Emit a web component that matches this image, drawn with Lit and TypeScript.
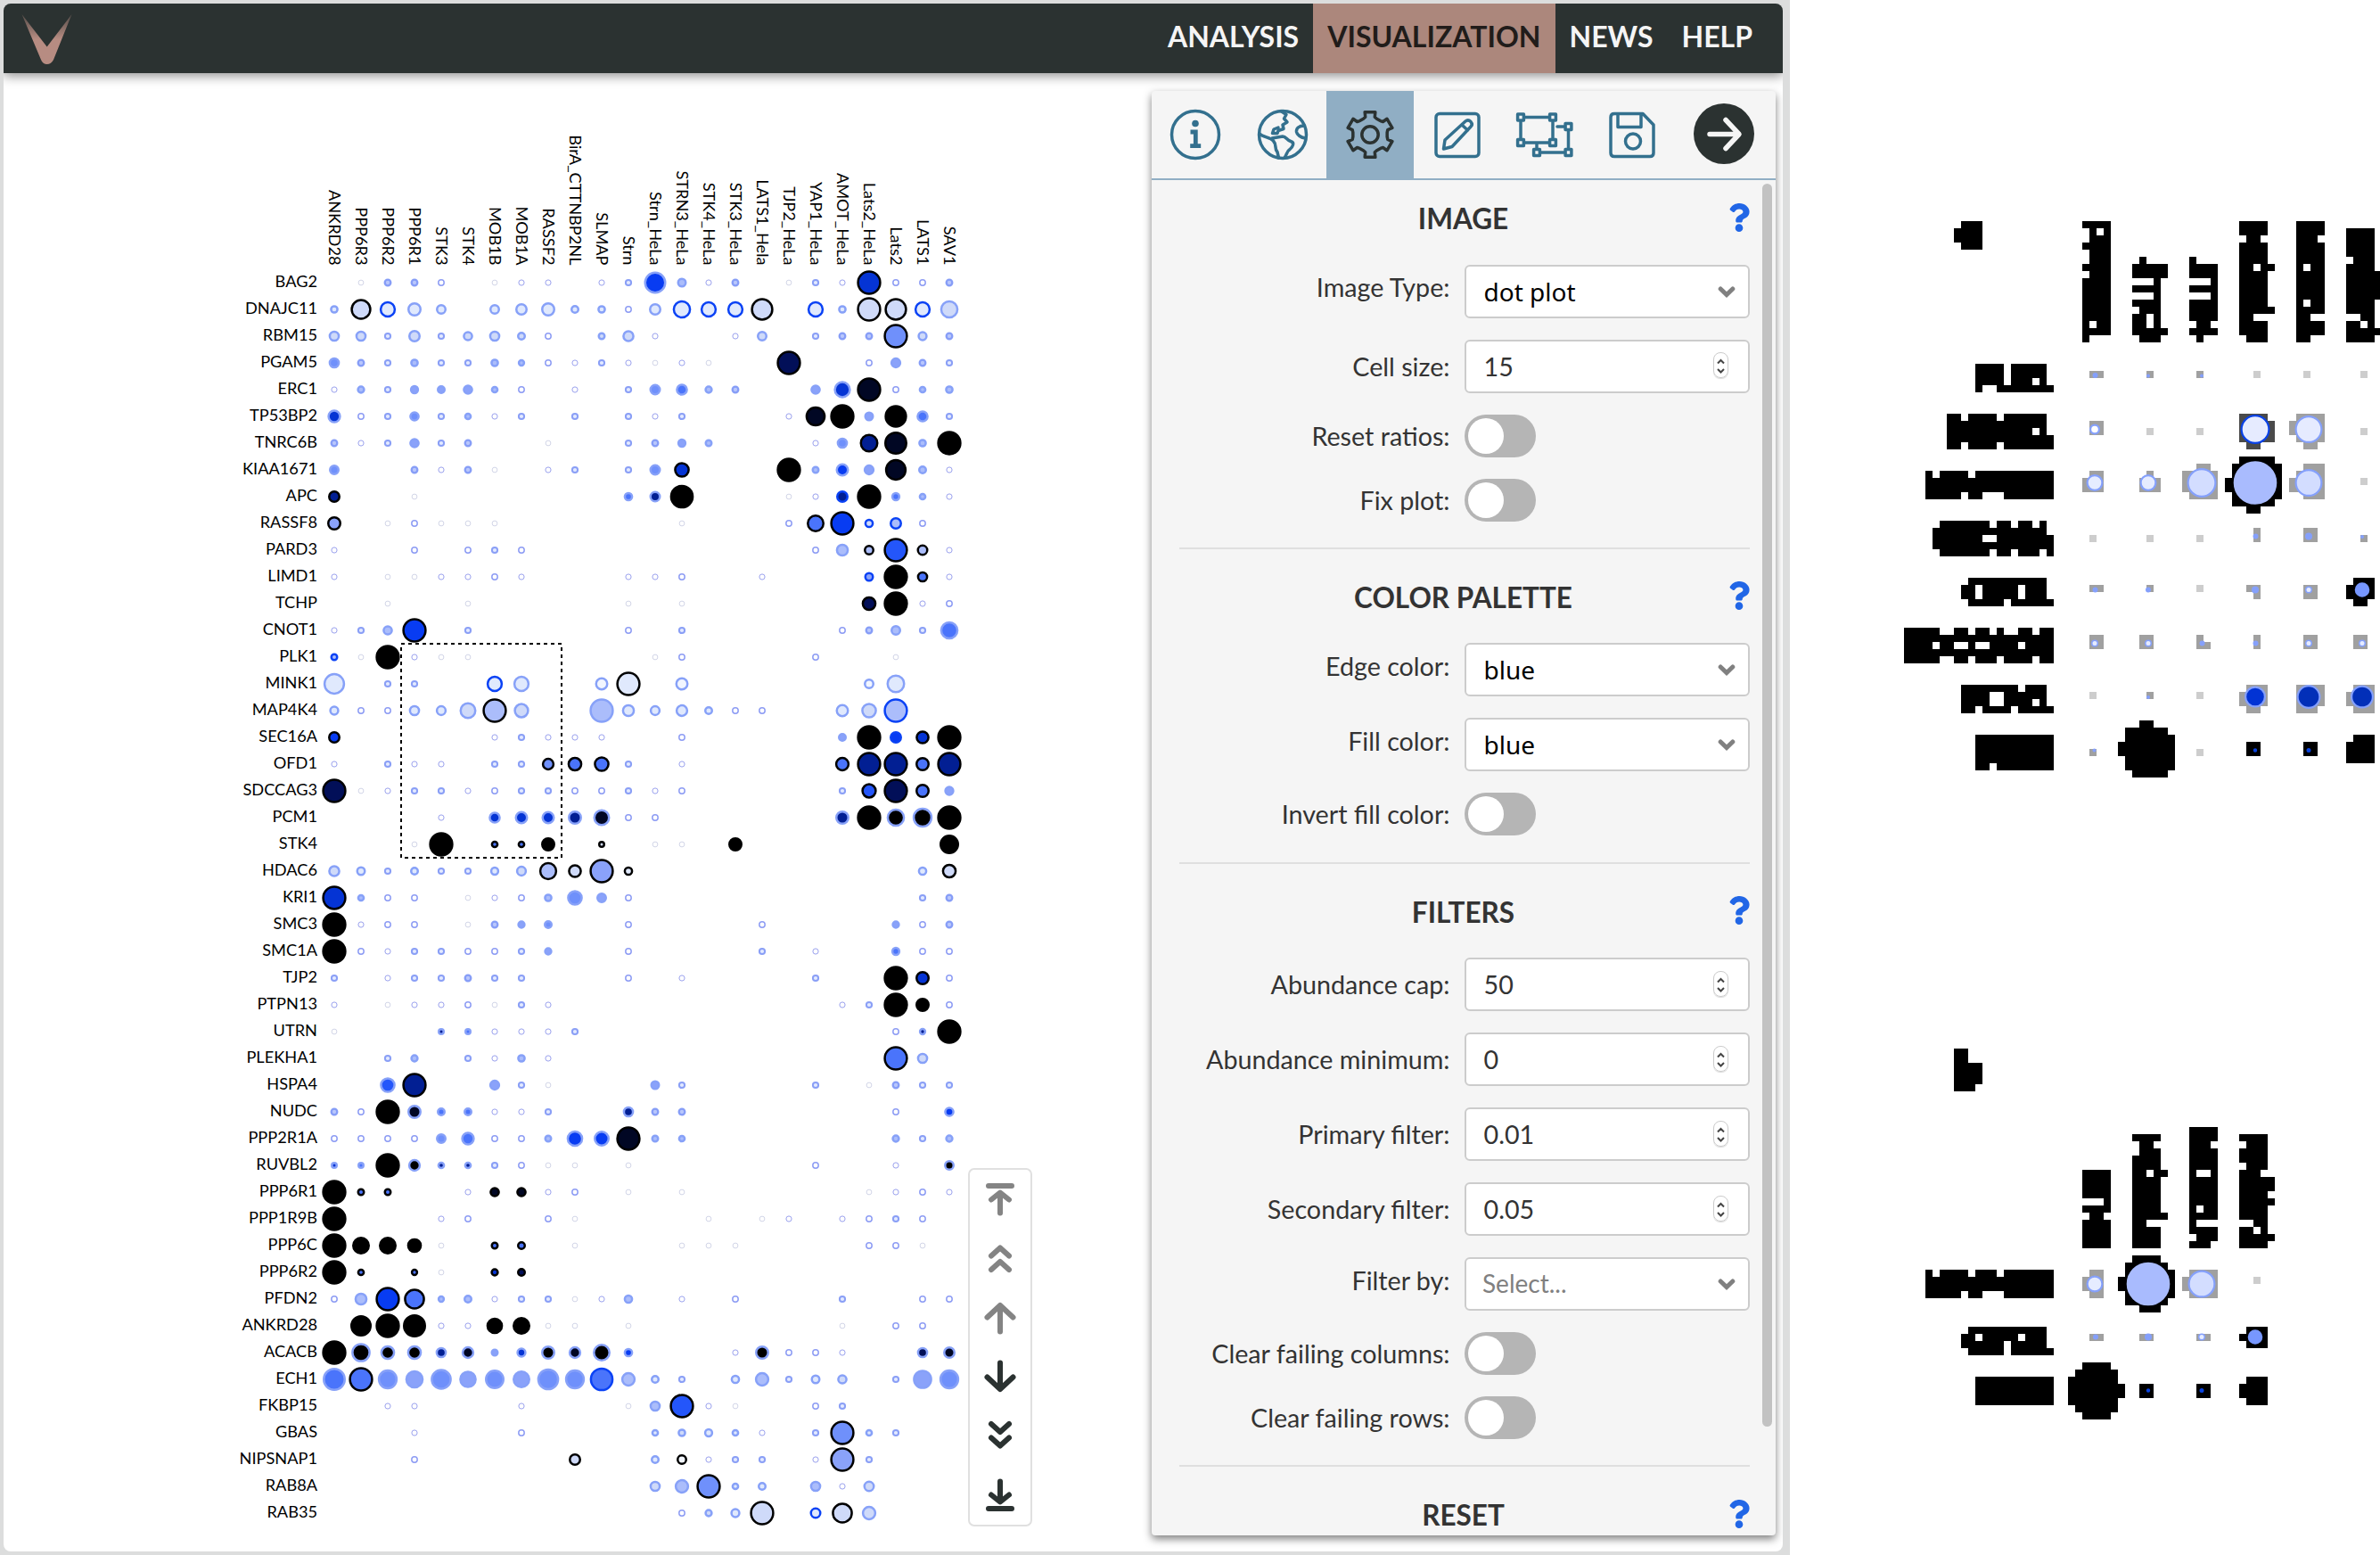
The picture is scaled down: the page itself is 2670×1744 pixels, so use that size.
import { LitElement, html, svg, css } from "lit";
import { customElement, property } from "lit/decorators.js";

const COLUMNS = [
  "ANKRD28", "PPP6R3", "PPP6R2", "PPP6R1", "STK3", "STK4", "MOB1B", "MOB1A", "RASSF2", "BirA_CTTNBP2NL",
  "SLMAP", "Strn", "Strn_HeLa", "STRN3_HeLa", "STK4_HeLa", "STK3_HeLa", "LATS1_Hela", "TJP2_HeLa",
  "YAP1_HeLa", "AMOT_HeLa", "Lats2_HeLa", "Lats2", "LATS1", "SAV1",
];

/* One token per column: "." is an empty cell, a letter is a preset small ring,
   otherwise <size><edge><fill>, where size is six times the outer radius. */
const ROWS: [string, string][] = [
  ["BAG2", ". a e e c . a b b . b d 75l7 33l3 b e . a d b 82k8 c c e"],
  ["DNAJC11", "29l1 70k2 55b1 48l1 36l1 . 36l1 42l1 48l1 30l1 29l1 c 42l1 62b1 55b1 55b1 76k2 . 55b1 29l1 82k2 76k2 55b1 62l2"],
  ["RBM15", "38l2 38l2 d 42l2 d 35l2 38l2 30l2 c . 27l2 41l2 b . . b 36l2 . d e e 82k5 34l2 e"],
  ["PGAM5", "38l5 e d 29l3 d d 29l3 25l3 c b d b a b a . . 82kA . . c 37l4 e d"],
  ["ERC1", "b 28l3 d 31l4 30l4 35l4 26l3 c . b . d 39l5 41l6 28l3 e . . 35l4 58l8 82kB c 26l3 29l3"],
  ["TP53BP2", "46l8 c d 35l5 d 26l3 b d . d . d b d . . . b 68kB 82kC 33l4 76kC 41l6 d"],
  ["TNRC6B", "e b d 35l4 d e . . a . . d e 31l4 27l3 . . . b 38l5 63k9 78kB 29l3 82kC"],
  ["KIAA1671", "36l5 . . e b e a . b d . d 39l5 53k8 . . . 82kC 27l3 45l7 37l4 73kB 30l3 b"],
  ["APC", "42k9 . . a . . . . . . . 32l6 39l9 80kC . . . a b 42b9 82kC 31l6 26l3 b"],
  ["RASSF8", "48k4 . a c a a a . . . . . . a . . . c 60k6 82k7 32b2 42b3 c ."],
  ["PARD3", "b . . c . c d c . . . . . . . . . . c 44l3 36k3 82km 39k3 b"],
  ["LIMD1", "b . a a b b c b . . . b b c . . b . . . 33b4 82kC 38k6 b"],
  ["TCHP", ". . a . . a . . . . . a . a . . . . . . 50kA 82kC b c"],
  ["CNOT1", "b d 35l3 82k7 . d . . . . . c . d . . . . . c e 36l3 d 62l6"],
  ["PLK1", "27b3 a 82kC b a a . . . . . . a c . . . . c . . a . ."],
  ["MINK1", "73l1 . d d . . 55b1 55l1 . . 45l0 82k1 . 45l0 . . . . . . 36l0 63l1 . ."],
  ["MAP4K4", "34l1 c c 38l1 37l1 57l2 82k3 52l2 . . 82l3 44l1 37l1 43l1 30l1 c c . . 45l1 53l2 82b3 . ."],
  ["SEC16A", "42k7 . . . . . b d b b b . . c . . . . . 30l4 82kC 42b7 47k8 82kC"],
  ["OFD1", "b . d b b . d d 43k5 50k6 53k6 d . b . . . . . 49k6 82k9 82k9 48k6 82k9"],
  ["SDCCAG3", "82kA a b d d b c d d c c d b c . . . . . d 52km 82kA 48k6 34l4"],
  ["PCM1", ". . . . b . 41l8 45l8 45l8 48l9 57lB c c . . . . . . 48l9 82kC 62lC 67lC 82kC"],
  ["STK4", ". . . a 82kC . 26k6 26k6 48kC . 24k2 . a a . 48kC . . . . . . . 66kC"],
  ["HDAC6", "41l2 33l1 d 30l1 d d 31l1 37l2 61k3 47k2 82k4 32k1 . . . . . . . . . . 32l1 50k2"],
  ["KRI1", "82k8 26l3 c c . a b c 29l3 53l5 36l4 c . . . . . . . . . . d e"],
  ["SMC3", "82kC b c c . a e 28l4 30l5 . . c . . . . c . . . . 28l4 c e"],
  ["SMC1A", "82kC c b d d c c d 28l4 . . c . . . . d . b . . 31l6 c c"],
  ["TJP2", "d . b d d e d d . . . c . b . . . . d . . 82kC 48k8 c"],
  ["PTPN13", "b . a b b c a d b . . . . . . . . . . b d 82kC 48kC c"],
  ["UTRN", "a . . . 24l9 24l6 b b b d . . . . . . . . . . . c 25l9 82kC"],
  ["PLEKHA1", ". . d 28l3 . d b 29l3 b . . . . . . . . . . . . 82k6 38l2 ."],
  ["HSPA4", ". . 53lm 82k9 . . 37l4 d a . . . 33l4 d . . . . d . a e d d"],
  ["NUDC", "e c 82kC 48lB 30l6 30l6 b b d . . 38l9 e e . . . . . . . c . 35l7"],
  ["PPP2R1A", "c c c c 36l5 46l6 c c 27l3 56l7 54l7 82kB 27l3 26l3 . . . . . . . 28l3 d 28l3"],
  ["RUVBL2", "24l8 24l6 82kC 43lC 26l9 26l9 d c a a . a . . . . . . c . . b . 36lC"],
  ["PPP6R1", "82kC 27k6 27k6 . . b 35kB 35kB b c . a . a . . . . . . a b c b"],
  ["PPP1R9B", "82kC . . . b c . . c a . . . . a . a b . b c d c ."],
  ["PPP6C", "82kC 60kC 60kC 50kC a . 27k6 30k6 . a . . . a a a . . . . c c a ."],
  ["PPP6R2", "82kC 26k6 . 25k6 a . 28k8 30kA . . ."],
  ["PFDN2", "c 44l3 82k7 71k6 25l3 30l3 b d d a b 32l3 . b . c . . . d . . c c"],
  ["ANKRD28", ". 72kC 82kC 78kC b b 56kC 60kC a a . a . . . . . . . a . c c ."],
  ["ACACB", "82kC 65lC 50lC 50lC 38l9 43lB 27l4 34l8 48lC 43lB 60lC 32l7 . . . b 48lC c c b . . 38lA 42lB"],
  ["ECH1", "78l6 82k6 67l5 62l4 71l5 59l4 66l5 60l4 74l5 67l5 80b6 49l3 30l1 d . 32l1 49l3 d 33l1 35l2 . d 65l4 67l5"],
  ["FKBP15", ". . b b . . . b . . . a 38l3 82km b a . . c d . . . ."],
  ["GBAS", ". . . b . . . c . . . . 26l1 29l2 31l1 26l1 b . d 82k5 26l1 d . ."],
  ["NIPSNAP1", ". . . c . . . . . 42k2 . . 30l1 36k0 b d d . b 82k4 d . . ."],
  ["RAB8A", ". . . . . . . . . . . . 38l2 49l3 82k5 26l1 30l1 . 38l3 b 39l2 . . ."],
  ["RAB35", ". . . . . . . . . . . . . c 28l2 34l1 82k2 . 39b1 71k2 49l2 . . ."],
];

const EDGE: Record<string, string> = { k: "#000", b: "#0a42f5", l: "#87a1f8" };
const FILL: Record<string, string> = {
  "0": "#f2f6ff", "1": "#e0e9fd", "2": "#cfdaf9", "3": "#abbdfb", "4": "#8aa2fa", "5": "#6f90fb", "6": "#4a74fb",
  m: "#2456fa", "7": "#083cf2", "8": "#0534d4", "9": "#021f93", A: "#020f58", B: "#010724", C: "#000",
};
const PRESET: Record<string, [number, number, string, string]> = {
  a: [2.9, 0.6, "#b4b8d6", "none"],
  b: [3.1, 1, "#9ba2ee", "#fff"],
  c: [3.2, 1.5, "#8e9df4", "#fff"],
  d: [3.1, 2, "#8a9ff6", "#e3eaff"],
  e: [3.3, 2.3, "#869df7", "#b9c7fc"],
};

const dot = (token: string, x: number, y: number) => {
  if (token === ".") return null;
  const p = PRESET[token];
  if (p) return svg`<circle cx=${x} cy=${y} r=${p[0]} stroke-width=${p[1]} stroke=${p[2]} fill=${p[3]} />`;
  const n = token.length;
  const size = Number(token.slice(0, n - 2));
  return svg`<circle cx=${x} cy=${y} r=${size / 6 - 1.25} stroke-width="2.5" stroke=${EDGE[token[n - 2]]} fill=${FILL[token[n - 1]]} />`;
};

@customElement("dot-plot")
class DotPlot extends LitElement {
  static styles = css`
    :host { display: block; }
    svg { display: block; }
    text { font: 400 18.2px Lato, sans-serif; fill: #000; text-anchor: end; }
    .region { fill: none; stroke: #000; stroke-width: 2; stroke-dasharray: 4 4; }
  `;
  render() {
    return html`<svg width="1288" height="1658" viewBox="4 82 1288 1658">
      ${COLUMNS.map((c, i) => svg`<text transform=${`translate(${369.2 + i * 30} 297.5) rotate(90)`}>${c}</text>`)}
      ${ROWS.map(([name, cells], r) => svg`
        <text x="356" y=${321.6 + r * 30}>${name}</text>
        ${cells.split(" ").map((t, c) => dot(t, 375 + c * 30, 317 + r * 30))}`)}
      <rect class="region" x="450" y="722" width="180" height="240" />
    </svg>`;
  }
}

const NAV_ICONS: { d: string; muted: boolean }[] = [
  { d: "M-13 -15H13M0 15.5V-7M-10 0.5L0 -7.5L10 0.5", muted: true },
  { d: "M-10 -2.5L0 -11.5L10 -2.5M-10 13L0 4L10 13", muted: true },
  { d: "M0 15.5V-13M-14.5 -0.5L0 -14L14.5 -0.5", muted: true },
  { d: "M0 -15.5V13M-14.5 0.5L0 14L14.5 0.5", muted: false },
  { d: "M-10 -13L0 -4L10 -13M-10 2.5L0 11.5L10 2.5", muted: false },
  { d: "M-13 15H13M0 -15.5V7M-10 -0.5L0 7.5L10 -0.5", muted: false },
];

@customElement("scroll-nav")
class ScrollNav extends LitElement {
  static styles = css`
    :host {
      display: flex; flex-direction: column; box-sizing: border-box; width: 72px; height: 402px;
      border: 2px solid #e0e0e0; border-radius: 7px; background: #fff;
    }
    .item { flex: 1; display: flex; align-items: center; justify-content: center; color: #2b3231; }
    .muted { color: #848484; }
    path { fill: none; stroke: currentColor; stroke-width: 6; stroke-linecap: round; stroke-linejoin: round; }
  `;
  render() {
    return NAV_ICONS.map((i) => html`<div class="item ${i.muted ? "muted" : ""}">
      <svg width="44" height="44" viewBox="-22 -22 44 44"><path d=${i.d} /></svg>
    </div>`);
  }
}

const gearPath = () => {
  const pts: string[] = [];
  for (let i = 0; i < 6; i++) {
    const base = -90 + i * 60;
    for (const [a, r] of [[-23, 19.3], [-15, 20.5], [-13, 26], [13, 26], [15, 20.5], [23, 19.3]]) {
      const t = ((base + a) * Math.PI) / 180;
      pts.push(`${(r * Math.cos(t)).toFixed(2)} ${(r * Math.sin(t)).toFixed(2)}`);
    }
  }
  return `M${pts.join("L")}Z`;
};

const NODES = [[-27, -19.5], [9, -19.5], [-27, 9], [9, 9], [26.5, -9], [-9, 20], [26.5, 20]];
const TAB_ICONS = [
  svg`<circle r="26.5" /><circle class="solid" cy="-12.5" r="3.8" /><path stroke-width="4.8" stroke-linejoin="miter" stroke-linecap="butt" d="M-5.5 -3H0.3V12.6M-5.8 12.6H6.2" />`,
  svg`<circle r="26.5" /><path d="M-2 -26.5L4 -22.500L1.500 -18L5 -14L0 -11L1 -6.500L-5 -4.500L-6 -1.500H-11.500L-10 -6L-5 -8M-26 -1C-22 3-14 3-10.500 7C-6 12-10 15-6 19.500L-4.500 26M-12 4L0 2C4 2 4 6 9 7.500C14 9 11 14 8 16.500C4 19 5 22 2 26M24 -10C18 -10 15 -7 15.500 -3C16 0 20 3 25 4" />`,
  svg`<path d=${gearPath()} /><circle r="9.2" />`,
  svg`<rect x="-24" y="-23.5" width="48" height="48" rx="4" /><path d="M-15.5 16L-14 6L9 -15Q12 -17.500 15 -14.500Q17.500 -11.500 15 -9L-6 13.500ZM5 -11L11.500 -5" />`,
  svg`<path d="M-22 -19.500H4M-27 -14.500V4M9 -14.500V4M-22 9H4M14 -9H21.500M26.500 -4V15M-9 9V15M-4 20H21.500" />
    ${NODES.map(([x, y]) => svg`<rect x=${x - 3.4} y=${y - 3.4} width="6.800" height="6.800" />`)}`,
  svg`<path d="M-20 -23.500H12L24 -11V20.500Q24 24.500 20 24.500H-20Q-24 24.500 -24 20.500V-19.500Q-24 -23.500 -20 -23.500ZM-16 -23.500V-8.500H10V-23.500" /><circle cx="1" cy="7.500" r="8.500" />`,
];

const QUESTION = "M202.021 0C122.202 0 70.503 32.703 29.914 91.026c-7.363 10.58-5.093 25.086 5.178 32.874l43.138 32.709c10.373 7.865 25.132 6.026 33.253-4.148 25.049-31.381 43.63-49.449 82.757-49.449 30.764 0 68.816 19.799 68.816 49.631 0 22.552-18.617 34.134-48.993 51.164-35.423 19.86-82.299 44.576-82.299 106.405V320c0 13.255 10.745 24 24 24h72.471c13.255 0 24-10.745 24-24v-5.773c0-42.86 125.268-44.645 125.268-160.627C377.504 66.256 286.902 0 202.021 0zM192 373.459c-38.196 0-69.271 31.075-69.271 69.271 0 38.195 31.075 69.27 69.271 69.27s69.271-31.075 69.271-69.271-31.075-69.27-69.271-69.27z";

type Field = { kind: "select" | "number" | "toggle"; label: string; value?: string; placeholder?: boolean };
const SECTIONS: { title: string; fields: Field[] }[] = [
  { title: "IMAGE", fields: [
    { kind: "select", label: "Image Type:", value: "dot plot" },
    { kind: "number", label: "Cell size:", value: "15" },
    { kind: "toggle", label: "Reset ratios:" },
    { kind: "toggle", label: "Fix plot:" },
  ] },
  { title: "COLOR PALETTE", fields: [
    { kind: "select", label: "Edge color:", value: "blue" },
    { kind: "select", label: "Fill color:", value: "blue" },
    { kind: "toggle", label: "Invert fill color:" },
  ] },
  { title: "FILTERS", fields: [
    { kind: "number", label: "Abundance cap:", value: "50" },
    { kind: "number", label: "Abundance minimum:", value: "0" },
    { kind: "number", label: "Primary filter:", value: "0.01" },
    { kind: "number", label: "Secondary filter:", value: "0.05" },
    { kind: "select", label: "Filter by:", value: "Select...", placeholder: true },
    { kind: "toggle", label: "Clear failing columns:" },
    { kind: "toggle", label: "Clear failing rows:" },
  ] },
  { title: "RESET", fields: [] },
];

@customElement("settings-panel")
class SettingsPanel extends LitElement {
  static styles = css`
    :host {
      display: flex; flex-direction: column; width: 700px; height: 1620px; background: #f5f5f5; color: #333;
      border-radius: 4px; overflow: hidden; box-shadow: 0 4px 10px rgba(0, 0, 0, 0.5); font-family: Lato, sans-serif;
    }
    .tabs { display: flex; height: 98px; flex: none; border-bottom: 2px solid #90aec4; }
    .tab { width: 98px; display: flex; align-items: center; justify-content: center; color: #33708e; }
    .tab svg { fill: none; stroke: currentColor; stroke-width: 3.500; stroke-linejoin: round; stroke-linecap: round; margin-top: -1px; }
    .tab .solid { fill: currentColor; stroke: none; }
    .active { background: #90aec4; color: #2b3231; }
    .next { flex: 1; display: flex; align-items: center; padding-left: 18.500px; padding-bottom: 2px; }
    .body { flex: 1; display: flex; min-height: 0; overflow: hidden; }
    .content { width: 640px; padding-left: 30.500px; flex: none; }
    .bar { width: 11.500px; height: 1394px; margin: 4px 0 0 14px; border-radius: 6px; background: #c2c2c2; }
    .section { padding: 34px 0 29.250px; border-top: 2px solid #dfdfdf; }
    .section:first-child { border-top: none; padding-top: 23px; }
    .head { display: grid; grid-template-columns: 22px 1fr 24px; align-items: center; height: 40px; margin-bottom: 31.500px; }
    h2 { grid-column: 2; margin: 0; text-align: center; font-size: 31.500px; line-height: 40px; font-weight: 700; }
    .help { fill: #2166e6; display: block; margin-top: -3px; }
    .fields { display: flex; flex-direction: column; gap: 24px; }
    .field { display: grid; grid-template-columns: 304px 320px; column-gap: 16px; align-items: center; }
    .label { text-align: right; font-size: 28.700px; line-height: 36px; white-space: nowrap; }
    .select .label { padding-bottom: 9px; }
    .box {
      box-sizing: border-box; height: 60px; display: flex; align-items: center; justify-content: space-between;
      border: 2px solid #ccc; border-radius: 6px; background: #fff; padding-left: 20px; font-size: 28.700px;
    }
    .select .box { font-family: "Noto Sans", sans-serif; font-size: 28px; color: #000; padding-right: 14px; }
    .select .box.placeholder { font-family: Lato, sans-serif; color: #808080; padding-left: 18.500px; }
    .box.placeholder span { margin-top: -3px; }
    .number .box { padding-right: 22px; }
    .spin {
      box-sizing: border-box; width: 17px; height: 29px; border: 1px solid #ccc; border-radius: 8px;
      margin-top: -2px; box-shadow: 0 1px 1px rgba(0, 0, 0, 0.15);
    }
    .toggle .label { line-height: 48px; }
    .switch { box-sizing: border-box; width: 80px; height: 48px; border-radius: 24px; background: #b5b5b5; padding: 4px; }
    .knob { width: 40px; height: 40px; border-radius: 50%; background: #fff; }
    .chev { fill: none; stroke: #808080; stroke-width: 5; stroke-linecap: round; stroke-linejoin: miter; }
  `;
  private control(f: Field) {
    if (f.kind === "toggle") return html`<div class="switch"><div class="knob"></div></div>`;
    if (f.kind === "number")
      return html`<div class="box"><span>${f.value}</span><div class="spin">
        <svg width="15" height="27" viewBox="0 0 15 27" fill="none" stroke="#444" stroke-width="2"><path d="M4 10.500L7.500 7L11 10.500M4 17L7.500 20.500L11 17" /></svg>
      </div></div>`;
    return html`<div class="box ${f.placeholder ? "placeholder" : ""}"><span>${f.value}</span>
      <svg class="chev" width="20" height="14" viewBox="0 0 20 14"><path d="M3.200 4L10 10.500L16.800 4" /></svg></div>`;
  }
  render() {
    return html`
      <div class="tabs">
        ${TAB_ICONS.map((icon, i) => html`<div class="tab ${i === 2 ? "active" : ""}">
          <svg width="72" height="60" viewBox="-36 -30 72 60">${icon}</svg></div>`)}
        <div class="next"><svg width="70" height="70" viewBox="-35 -35 70 70">
          <circle r="34" fill="#2b3231" /><path d="M-16 0.500H15M2 -15.500L17 0.500L2 16.500" fill="none" stroke="#f5f5f5" stroke-width="5.500" stroke-linecap="round" stroke-linejoin="round" />
        </svg></div>
      </div>
      <div class="body">
        <div class="content">
          ${SECTIONS.map((s) => html`<div class="section">
            <div class="head"><h2>${s.title}</h2>
              <svg class="help" width="24" height="32" viewBox="0 0 384 512"><path d=${QUESTION} /></svg></div>
            <div class="fields">${s.fields.map((f) => html`<div class="field ${f.kind}">
              <div class="label">${f.label}</div>${this.control(f)}</div>`)}</div>
          </div>`)}
        </div>
        <div class="bar"></div>
      </div>`;
  }
}

/* Low-resolution overview: bitmaps are on an 8 px grid, given as column, row and lines of cells. */
const rep = (s: string, n: number) => Array<string>(n).fill(s);
const BITMAPS: [number, number, string[]][] = [
  [274, 31, [".###", "####", "####", ".###"]],
  [292, 31, ["####", ".#.#", ".###", "####", ".###", ".###", "####", ".###", ...rep("####", 6), "#.##", "####", "#..."]],
  [299, 36, [".#...", "#####", "#####", "...#.", "####.", "...#.", "####.", ".###.", "##.#.", "##.#.", "#####", ".###."]],
  [307, 36, ["#...", "####", "####", "...#", "####", "...#", "####", "####", "####", ".##.", "####", ".#.."]],
  [314, 31, ["####.", "####.", ".##..", ...rep("####.", 3), "##.##", ...rep("####.", 5), "#####", "##...", "####.", "####.", ".###."]],
  [322, 31, ["####", "####", "###.", ...rep("####", 3), "#.##", ...rep("####", 4), "#.##", "####", "##..", "####", "####", "##.."]],
  [329, 32, [...rep("####.", 4), ".###.", "####.", ...rep("#####", 4), "####.", "####.", "..##.", "##.#.", "#####", "####."]],
  [277, 51, ["####.#####.", "####.#####.", "####.###.#.", "#..########"]],
  [273, 58, ["##.####.######.", "##############.", "############.#.", "###############", "##.####.#######"]],
  [270, 66, ["#.####.###########", ...rep("##################", 2), "#####.##...#######"]],
  [271, 73, [".#######.##.##.#.", "################.", "#######..########", "#################", ".#######.##.###.#"]],
  [275, 81, [".###########.", ...rep("##.#####.###.", 2), ".#####.######"]],
  [267, 88, ["#####..##.##.#..##.##", "#####################", "####.##..#..####.####", "#####################", "#####..##.###.####.##"]],
  [275, 96, ["########.###.", "####..######.", "####..####.#.", "##.####.#####"]],
  [277, 103, [...rep("###########", 4), "##.########"]],
  [297, 101, ["...##...", ".######.", ".#######", "########", "########", ".#######", ".#######", "..#####."]],
  [312, 64, ["..#####.", ".#######", ".#######", "########", "########", ".#######", ".######.", "...##..."]],
  [315, 104, ["##", "##"]],
  [323, 104, ["##", "##"]],
  [329, 103, [".###", "####", "####", "####"]],
  [329, 81, [".###", "####", "####", ".##."]],
  [274, 147, ["##..", "##..", "####", "####", "####", "###."]],
  [292, 164, [...rep("####", 4), "...#", "####", ".##.", ...rep("####", 4)]],
  [299, 159, ["####.", ".##..", ".###.", "####.", "####.", "##.##", ...rep("####.", 5), "#####", "##...", ...rep("####.", 3)]],
  [307, 158, ["####", "####", "###.", ...rep("####", 3), "#..#", ...rep("####", 4), "#.##", "####", "#...", "####", ".###", "###."]],
  [314, 159, ["####.", ".###.", "####.", "####.", ".###.", "###..", "#####", "#####", "####.", "#####", "####.", "####.", "..##.", "##.#.", "#####", "####."]],
  [270, 178, ["#.####.###.#######", ...rep("##################", 2), "#####.##...#######"]],
  [275, 186, [".###########.", "##.#####.###.", "######.#####.", ".#####.######"]],
  [277, 193, rep("###########", 4)],
  [297, 176, ["..####..", ".######.", ".#######", "########", "########", ".#######", ".######.", "...###.."]],
  [290, 191, ["..####..", ".######.", "#######.", "########", "########", "#######.", ".######.", "..####.."]],
  [300, 194, ["##", "##"]],
  [308, 194, ["##", "##"]],
  [314, 186, [".###", "####", ".###"]],
  [314, 193, [".###", "####", "####", ".###"]],
];
const G = "#a0a0a0", L = "#cdcdcd", K = "#4a4a4a";
const CELLS: [number, number, number, number, string][] = [
  [293, 52, 2, 1, G], [301, 52, 1, 1, G], [308, 52, 1, 1, G], [316, 52, 1, 1, L], [323, 52, 1, 1, L], [331, 52, 1, 1, L],
  [293, 59, 2, 2, G], [301, 60, 1, 1, L], [308, 60, 1, 1, L], [331, 60, 1, 1, L],
  [314, 58, 4, 4, K], [318, 59, 1, 3, K], [315, 62, 2, 1, K],
  [321, 59, 1, 2, G], [322, 58, 4, 4, G], [323, 62, 2, 1, G],
  [292, 67, 3, 2, G], [293, 66, 2, 1, G], [300, 67, 3, 2, G], [301, 66, 1, 1, G],
  [306, 66, 1, 3, G], [308, 65, 2, 1, G], [307, 66, 4, 3, G], [307, 69, 4, 1, G],
  [321, 67, 1, 2, G], [322, 66, 4, 3, G], [323, 65, 3, 1, G], [323, 69, 3, 1, G], [331, 67, 1, 1, L],
  [293, 75, 1, 1, L], [301, 75, 1, 1, L], [308, 75, 1, 1, L], [316, 74, 1, 2, G], [323, 74, 2, 2, G], [331, 75, 1, 1, G],
  [293, 82, 2, 1, G], [301, 82, 1, 1, G], [308, 82, 1, 1, L], [315, 82, 2, 1, G], [316, 83, 1, 1, G], [323, 82, 2, 2, G],
  [293, 89, 2, 2, G], [300, 89, 2, 2, G], [308, 89, 1, 2, G], [309, 90, 1, 1, G], [316, 89, 1, 2, G], [323, 89, 2, 2, G], [330, 89, 2, 2, G],
  [293, 97, 1, 1, L], [301, 97, 1, 1, G], [308, 97, 1, 1, L],
  [315, 96, 3, 3, G], [314, 97, 1, 2, G], [315, 99, 2, 1, G], [322, 96, 4, 3, G], [322, 99, 3, 1, G],
  [330, 96, 3, 3, G], [329, 97, 1, 2, G], [330, 99, 3, 1, G],
  [293, 105, 1, 1, G], [308, 105, 1, 1, L],
  [293, 178, 2, 4, G], [292, 179, 1, 2, G], [307, 178, 4, 4, G], [306, 179, 1, 2, G], [316, 179, 1, 1, L],
  [293, 187, 2, 1, G], [300, 187, 2, 1, G], [308, 187, 2, 1, G],
];
const B = "#85a0fb";
/* x, y, outer radius, edge, fill */
const CIRCLES: [number, number, number, string, string][] = [
  [2350.5, 421, 3, B, B], [2410, 421.5, 2, B, B], [2470, 421.5, 2, B, B],
  [2350, 481.5, 6, B, "#fff"], [2530, 481.5, 16.5, "#0a42e6", "#e6ebff"], [2590, 481.5, 15.5, B, "#e6ebff"],
  [2350, 541.5, 9.5, B, "#e6ecff"], [2410, 541.5, 9.5, B, "#e6ecff"], [2470, 541.5, 16.5, B, "#d3ddff"],
  [2530, 541.5, 26.5, "#000", "#a9bbfe"], [2590, 541.5, 15.5, B, "#d3ddff"],
  [2530.5, 601.5, 3, B, B], [2590, 601.5, 4, B, B], [2650, 602, 2, B, B],
  [2350.5, 661.5, 3, B, B], [2410, 661.5, 3, B, B], [2530, 661.5, 4, B, B], [2590, 661.5, 4, B, "#e6ecff"], [2650, 661.5, 10.5, "#000", "#7797ff"],
  [2350, 721.5, 4, B, "#e6ecff"], [2410, 721.5, 4, B, "#e6ecff"], [2470.5, 721.5, 3, B, B], [2530.5, 721.5, 3, B, B], [2590, 721.5, 4, B, "#e6ecff"], [2650, 721.5, 4, B, "#e6ecff"],
  [2410, 782, 2, B, B], [2530, 781.5, 12, B, "#0233d4"], [2590, 781.5, 13.5, B, "#022fb8"], [2650, 781.5, 13, B, "#022fb8"],
  [2349.5, 841.5, 2, B, B], [2530, 841.5, 2.2, "#0a44e0", "#0a44e0"], [2590, 841.5, 2.5, "#0a44e0", "#0a44e0"],
  [2350, 1440, 9.5, B, "#e6ecff"], [2410, 1440, 26.5, "#000", "#a9bbfe"], [2470, 1440, 15.5, B, "#d3ddff"],
  [2351, 1499.5, 3, B, B], [2410, 1499.5, 4, B, B], [2470, 1499.5, 4, B, "#e6ecff"], [2530, 1499.5, 10.5, "#000", "#7797ff"],
  [2410, 1559.5, 2.2, "#0a44e0", "#0a44e0"], [2470, 1559.5, 2.5, "#0a44e0", "#0a44e0"],
];

@customElement("region-overview")
class RegionOverview extends LitElement {
  static styles = css`
    :host { display: block; }
    svg { display: block; }
    .pixels { shape-rendering: crispEdges; }
  `;
  render() {
    const cells = CELLS.map(([x, y, w, h, f]) => svg`<rect x=${x * 8} y=${y * 8} width=${w * 8} height=${h * 8} fill=${f} />`);
    const path = BITMAPS.map(([x, y, lines]) => lines.map((line, j) =>
      [...line.matchAll(/#+/g)].map((m) => `M${(x + m.index!) * 8} ${(y + j) * 8}h${m[0].length * 8}v8h-${m[0].length * 8}z`).join("")).join("")).join("");
    return html`<svg width="662" height="1744" viewBox="2008 0 662 1744">
      <g class="pixels">${cells}<path d=${path} /></g>
      ${CIRCLES.map(([x, y, r, e, f]) => {
        const s = r > 5 ? 2.2 : 1.5;
        return svg`<circle cx=${x} cy=${y} r=${r - s / 2} stroke-width=${s} stroke=${e} fill=${f} />`;
      })}
    </svg>`;
  }
}

@customElement("app-root")
class AppRoot extends LitElement {
  @property() current = "VISUALIZATION";
  static styles = css`
    :host { display: flex; width: 2670px; height: 1744px; overflow: hidden; background: #fff; font-family: Lato, sans-serif; }
    .frame { box-sizing: border-box; width: 2008px; height: 1744px; padding: 4px 8px 4px 4px; background: #dcdddd; flex: none; }
    .window { height: 1736px; background: #fff; border-radius: 8px; overflow: hidden; display: flex; flex-direction: column; }
    header {
      height: 78px; flex: none; display: flex; align-items: stretch; background: #2b3231; padding-right: 18px;
      box-shadow: 0 3px 12px rgba(0, 0, 0, 0.450); z-index: 1;
    }
    .logo { margin: 0 auto 0 16px; }
    .link { display: flex; align-items: center; padding: 0 16px 5px; font-size: 32px; line-height: 40px; font-weight: 700; color: #f5f5f5; }
    .current { background: #ac877c; color: #211c1a; }
    main { display: flex; flex: 1; position: relative; }
    settings-panel { margin-top: 20px; }
    scroll-nav { position: absolute; left: 1082px; top: 1228px; }
  `;
  render() {
    return html`
      <div class="frame"><div class="window">
        <header>
          <svg class="logo" width="66" height="78" viewBox="20 4 66 78">
            <defs><linearGradient id="fade" x1="0" y1="0" x2="0" y2="1">
              <stop offset="0" stop-color="#b78c82" stop-opacity="0.3" /><stop offset="0.5" stop-color="#b78c82" /><stop offset="1" stop-color="#b78c82" />
            </linearGradient></defs>
            <path fill="url(#fade)" d="M24.500 16L52.700 52.500L80.500 16L60 67Q57.500 72 52.700 72Q48 72 46 67Z" />
          </svg>
          ${["ANALYSIS", "VISUALIZATION", "NEWS", "HELP"].map((t) => html`<div class="link ${t === this.current ? "current" : ""}">${t}</div>`)}
        </header>
        <main>
          <dot-plot></dot-plot>
          <settings-panel></settings-panel>
          <scroll-nav></scroll-nav>
        </main>
      </div></div>
      <region-overview></region-overview>`;
  }
}
